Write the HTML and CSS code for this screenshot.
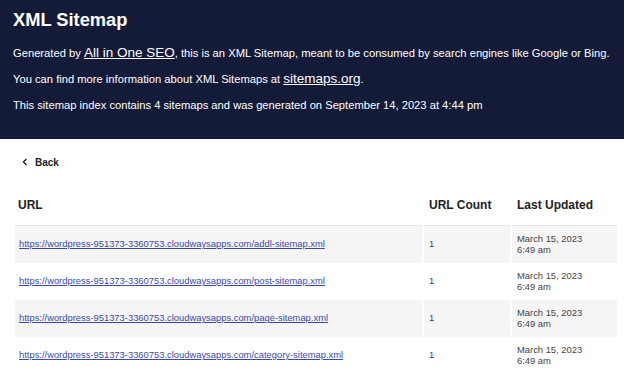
FILE: index.html
```html
<!DOCTYPE html>
<html lang="en">
<head>
    <meta charset="utf-8">
    <title>XML Sitemap</title>
    <link rel="stylesheet" href="styles.css">
</head>
<body>
    <div class="header">
        <h1>XML Sitemap</h1>
        <p>Generated by <a href="#">All in One SEO</a>, this is an XML Sitemap, meant to be consumed by search engines like Google or Bing.</p>
        <p>You can find more information about XML Sitemaps at <a href="#">sitemaps.org</a>.</p>
        <p>This sitemap index contains 4 sitemaps and was generated on September 14, 2023 at 4:44 pm</p>
    </div>
    <div class="content">
        <div class="breadcrumb">
            <svg class="chevron" width="6" height="8" viewBox="0 0 6 8"><path d="M4.5 1 L1.5 4 L4.5 7" fill="none" stroke="#222" stroke-width="1.4"/></svg>
            <span>Back</span>
        </div>
        <table class="sitemap">
            <thead>
                <tr>
                    <th class="col-url">URL</th>
                    <th class="col-count">URL Count</th>
                    <th class="col-date">Last Updated</th>
                </tr>
            </thead>
            <tbody>
                <tr>
                    <td><a href="#">https://wordpress-951373-3360753.cloudwaysapps.com/addl-sitemap.xml</a></td>
                    <td>1</td>
                    <td>March 15, 2023<br>6:49 am</td>
                </tr>
                <tr>
                    <td><a href="#">https://wordpress-951373-3360753.cloudwaysapps.com/post-sitemap.xml</a></td>
                    <td>1</td>
                    <td>March 15, 2023<br>6:49 am</td>
                </tr>
                <tr>
                    <td><a href="#">https://wordpress-951373-3360753.cloudwaysapps.com/page-sitemap.xml</a></td>
                    <td>1</td>
                    <td>March 15, 2023<br>6:49 am</td>
                </tr>
                <tr>
                    <td><a href="#">https://wordpress-951373-3360753.cloudwaysapps.com/category-sitemap.xml</a></td>
                    <td>1</td>
                    <td>March 15, 2023<br>6:49 am</td>
                </tr>
            </tbody>
        </table>
    </div>
</body>
</html>
```

FILE: styles.css
```css
body {
    margin: 0;
    background-color: #fff;
    font-family: "Liberation Sans", Arial, sans-serif;
    color: #222;
}

.header {
    background-color: #141b38;
    color: #fff;
    padding: 9px 13px 19px;
    height: 111px;
}

.header h1 {
    font-size: 18.3px;
    line-height: 22px;
    margin: 0 0 14px;
}

.header p {
    font-size: 11.2px;
    line-height: 16px;
    margin: 0 0 10px;
    white-space: nowrap;
}

.header a {
    color: #fff;
    font-size: 13.5px;
}

.content {
    padding: 16px 0 0 13px;
}

.breadcrumb {
    display: flex;
    align-items: center;
    font-size: 10px;
    font-weight: bold;
    height: 14px;
    margin-left: 9px;
}

.chevron {
    margin-right: 7px;
}

.sitemap {
    width: 606px;
    table-layout: fixed;
    border-collapse: separate;
    border-spacing: 2px 0;
    margin-top: 20px;
}

.sitemap th {
    text-align: left;
    font-size: 12px;
    padding: 9px 3px 13px 5px;
    border-bottom: 1px solid #e4e4e4;
}

.sitemap th.col-url {
    padding-left: 3px;
}

.col-url {
    width: 401px;
}

.col-count {
    width: 78px;
}

.col-date {
    width: 97px;
}

.sitemap td {
    font-size: 9.4px;
    line-height: 11px;
    color: #444;
    height: 37px;
    padding: 0 3px 2px 5px;
    box-sizing: border-box;
}

.sitemap td:first-child {
    padding-left: 4px;
}

.sitemap tbody tr:nth-child(odd) td {
    background-color: #f5f5f5;
}

.sitemap td a {
    color: #3b4aa5;
}
```
